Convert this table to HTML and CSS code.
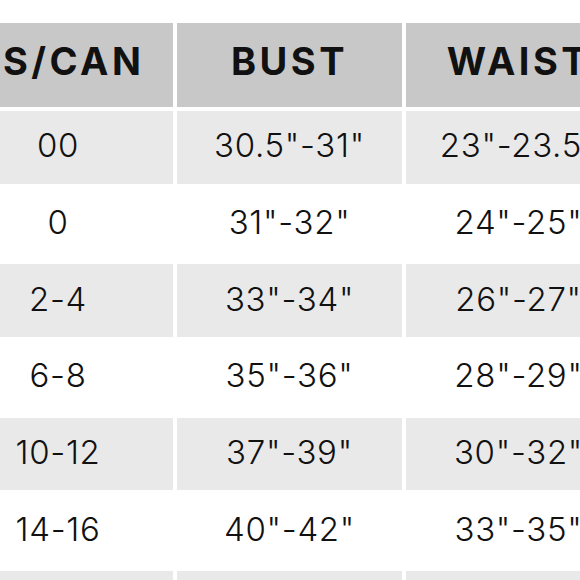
FILE: index.html
```html
<!DOCTYPE html>
<html>
<head>
<meta charset="utf-8">
<link rel="stylesheet" href="styles.css">
</head>
<body>
<div class="chart">
  <div class="cell head">US/CAN</div>
  <div class="cell head">BUST</div>
  <div class="cell head">WAIST</div>

  <div class="cell shade">00</div>
  <div class="cell shade">30.5"-31"</div>
  <div class="cell shade">23"-23.5"</div>

  <div class="cell">0</div>
  <div class="cell">31"-32"</div>
  <div class="cell">24"-25"</div>

  <div class="cell shade">2-4</div>
  <div class="cell shade">33"-34"</div>
  <div class="cell shade">26"-27"</div>

  <div class="cell">6-8</div>
  <div class="cell">35"-36"</div>
  <div class="cell">28"-29"</div>

  <div class="cell shade">10-12</div>
  <div class="cell shade">37"-39"</div>
  <div class="cell shade">30"-32"</div>

  <div class="cell">14-16</div>
  <div class="cell">40"-42"</div>
  <div class="cell">33"-35"</div>

  <div class="cell shade">18-20</div>
  <div class="cell shade">43"-45"</div>
  <div class="cell shade">36"-38"</div>
</div>
</body>
</html>
```
FILE: styles.css
```css
html, body {
  margin: 0;
  padding: 0;
  background: #ffffff;
  overflow: hidden;
}
body {
  width: 580px;
  height: 580px;
}
.chart {
  display: grid;
  grid-template-columns: 230px 225px 225px;
  grid-template-rows: 84px;
  grid-auto-rows: 72.7px;
  gap: 4px;
  margin-top: 23px;
  margin-left: -57px;
  font-family: "Inter", "Noto Sans", sans-serif;
  color: #111111;
}
.cell {
  display: flex;
  align-items: center;
  justify-content: center;
  padding-bottom: 4px;
  box-sizing: border-box;
  font-size: 33px;
  font-weight: 300;
  letter-spacing: 0.7px;
  white-space: nowrap;
  background: #ffffff;
}
.head {
  background: #c8c8c8;
  font-weight: 700;
  font-size: 38px;
  letter-spacing: 3.5px;
  padding-bottom: 8px;
}
.shade {
  background: #e9e9e9;
}
```
